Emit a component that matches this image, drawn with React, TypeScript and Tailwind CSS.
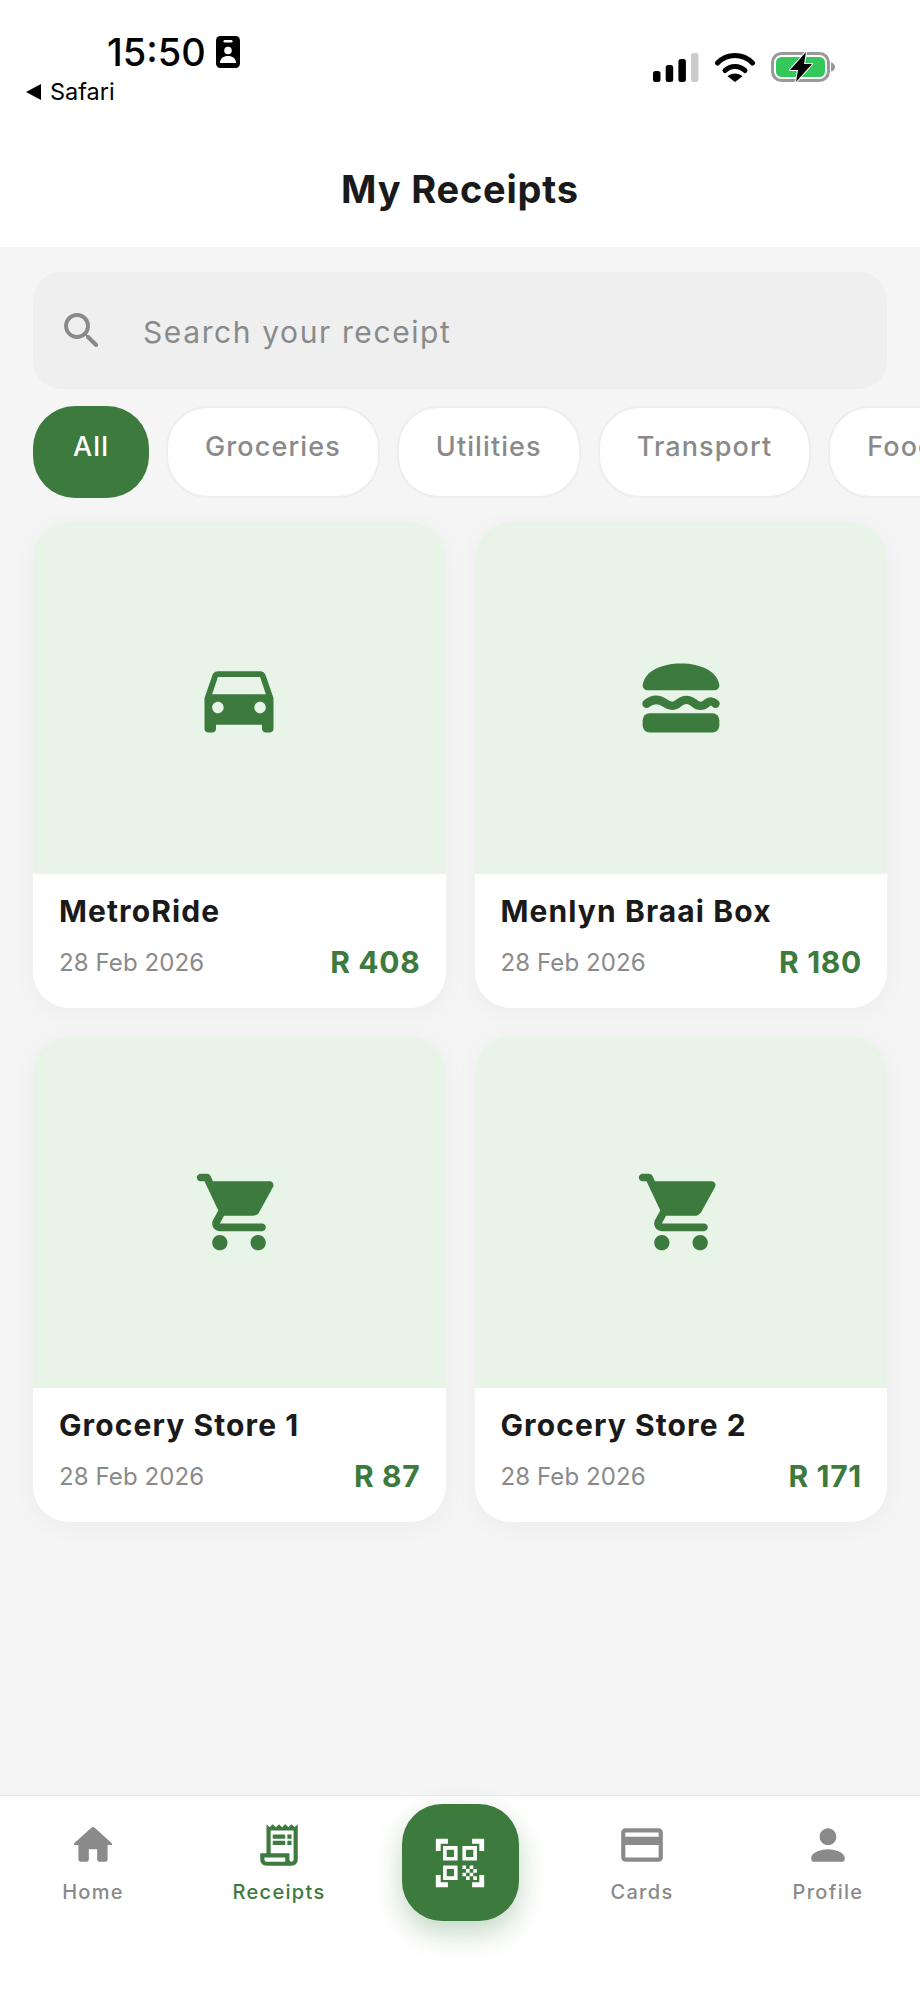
import React from 'react';

const GREEN = '#3d7a3d';

const paths = {
  car: 'M18.92 6.01C18.72 5.42 18.16 5 17.5 5h-11c-.66 0-1.21.42-1.42 1.01L3 12v8c0 .55.45 1 1 1h1c.55 0 1-.45 1-1v-1h12v1c0 .55.45 1 1 1h1c.55 0 1-.45 1-1v-8l-2.08-5.99zM6.5 16c-.83 0-1.5-.67-1.5-1.5S5.67 13 6.5 13s1.5.67 1.5 1.5S7.33 16 6.5 16zm11 0c-.83 0-1.5-.67-1.5-1.5s.67-1.5 1.5-1.5 1.5.67 1.5 1.5-.67 1.5-1.5 1.5zM5 11l1.5-4.5h11L19 11H5z',
  cart: 'M7 18c-1.1 0-1.99.9-1.99 2S5.9 22 7 22s2-.9 2-2-.9-2-2-2zM1 3c0 .55.45 1 1 1h1l3.6 7.59-1.35 2.44C4.52 15.37 5.48 17 7 17h11c.55 0 1-.45 1-1s-.45-1-1-1H7l1.1-2h7.45c.75 0 1.41-.41 1.75-1.03l3.58-6.49c.37-.66-.11-1.48-.87-1.48H5.21l-.67-1.43c-.16-.35-.52-.57-.9-.57H2c-.55 0-1 .45-1 1zm16 15c-1.1 0-1.99.9-1.99 2s.89 2 1.99 2 2-.9 2-2-.9-2-2-2z',
  home: 'M10 19v-5h4v5c0 .55.45 1 1 1h3c.55 0 1-.45 1-1v-7h1.7c.46 0 .68-.57.33-.87L12.67 3.6c-.38-.34-.96-.34-1.34 0l-8.36 7.53c-.34.3-.13.87.33.87H5v7c0 .55.45 1 1 1h3c.55 0 1-.45 1-1z',
  receipt: 'M19.5 3.5 18 2l-1.5 1.5L15 2l-1.5 1.5L12 2l-1.5 1.5L9 2 7.5 3.5 6 2v14H3v3c0 1.66 1.34 3 3 3h12c1.66 0 3-1.34 3-3V2l-1.5 1.5zM15 20H6c-.55 0-1-.45-1-1v-1h10v2zm4-1c0 .55-.45 1-1 1s-1-.45-1-1v-3H8V5h11v14zM9 7h6v2H9zM16 7h2v2h-2zM9 10h6v2H9zM16 10h2v2h-2z',
  qr: 'M9.5 6.5v3h-3v-3h3M11 5H5v6h6V5zm-1.5 9.5v3h-3v-3h3M11 13H5v6h6v-6zm6.5-6.5v3h-3v-3h3M19 5h-6v6h6V5zm-6 8h1.5v1.5H13V13zm1.5 1.5H16V16h-1.5v-1.5zM16 13h1.5v1.5H16V13zm-3 3h1.5v1.5H13V16zm1.5 1.5H16V19h-1.5v-1.5zM16 16h1.5v1.5H16V16zm1.5-1.5H19V16h-1.5v-1.5zm0 3H19V19h-1.5v-1.5zM22 7h-2V4h-3V2h5v5zm0 15v-5h-2v3h-3v2h5zM2 22h5v-2H4v-3H2v5zM2 2v5h2V4h3V2H2z',
  card: 'M20 4H4c-1.11 0-1.99.89-1.99 2L2 18c0 1.11.89 2 2 2h16c1.11 0 2-.89 2-2V6c0-1.11-.89-2-2-2zm0 14H4v-6h16v6zm0-10H4V6h16v2z',
  person: 'M12 12c2.21 0 4-1.79 4-4s-1.79-4-4-4-4 1.79-4 4 1.79 4 4 4zm0 2c-2.67 0-8 1.34-8 4v1c0 .55.45 1 1 1h14c.55 0 1-.45 1-1v-1c0-2.66-5.33-4-8-4z',
  search: 'M15.5 14h-.79l-.28-.27c1.2-1.4 1.82-3.31 1.48-5.34-.47-2.78-2.79-5-5.59-5.34-4.2-.52-7.75 3.03-7.23 7.23.34 2.8 2.56 5.12 5.34 5.59 2.03.34 3.94-.28 5.34-1.48l.27.28v.79l4.25 4.25c.41.41 1.08.41 1.49 0 .41-.41.41-1.08 0-1.49L15.5 14zm-6 0C7.01 14 5 11.99 5 9.5S7.01 5 9.5 5 14 7.01 14 9.5 11.99 14 9.5 14z',
};

type IconName = keyof typeof paths;

function Icon({ name, size, color }: { name: IconName; size: number; color: string }) {
  return (
    <svg width={size} height={size} viewBox="0 0 24 24" fill={color} className="block shrink-0">
      <path d={paths[name]} />
    </svg>
  );
}

function Burger() {
  return (
    <svg width={92} height={92} viewBox="0 0 24 24" fill={GREEN} className="block">
      <path d="M3.4 10h17.2c.8 0 1.5-.6 1.4-1.4C21.4 5 17.2 3 12 3S2.6 5 2 8.6C1.9 9.4 2.6 10 3.4 10z" />
      <rect x="2" y="16" width="20" height="5" rx="1.8" />
      <path
        d="M3 13.5c1.6-1.3 3.2-1.3 4.8-.2 1.4 1 2.4 1 3.6 0 1.4-1.1 2.6-1.1 4 0 1.2 1 2.2 1 3.4 0 .8-.6 1.4-.6 2.2.2"
        fill="none"
        stroke={GREEN}
        strokeWidth="2.2"
        strokeLinecap="round"
      />
    </svg>
  );
}

function StatusIcons() {
  return (
    <div className="flex items-start">
      <svg width={46} height={30} viewBox="0 0 46 30" className="block mt-px">
        <rect x="0" y="18" width="7.5" height="11" rx="2.5" fill="#000" />
        <rect x="12.7" y="12" width="7.5" height="17" rx="2.5" fill="#000" />
        <rect x="25.4" y="6" width="7.5" height="23" rx="2.5" fill="#000" />
        <rect x="38" y="0" width="7.5" height="29" rx="2.5" fill="#cbcbcb" />
      </svg>
      <svg width={40} height={30} viewBox="0 0 40 30" className="block ml-[16px]">
        <path d="M2.5 11C12 1 28 1 37.5 11" fill="none" stroke="#000" strokeWidth="5" strokeLinecap="round" />
        <path d="M10 18.5C15.5 13 24.500 13 30 18.500" fill="none" stroke="#000" strokeWidth="5" strokeLinecap="round" />
        <path d="M12.500 24.300C17 20.500 23 20.500 27.500 24.300L20 30z" fill="#000" />
      </svg>
      <svg width={64} height={30} viewBox="0 0 64 30" className="block ml-[16px]">
        <rect x="1.500" y="1.500" width="56" height="27" rx="9" fill="none" stroke="#999" strokeWidth="3" />
        <rect x="5" y="5" width="49" height="20" rx="5.500" fill="#34c759" />
        <path d="M60 10.500c2.500.5 4 2 4 4.500s-1.500 4-4 4.500z" fill="#999" />
        <path d="M35 0 19 18h8l-2 12 16-18h-8z" fill="#000" stroke="#fff" strokeWidth="2" paintOrder="stroke" strokeLinejoin="round" />
      </svg>
    </div>
  );
}

const chips = ['All', 'Groceries', 'Utilities', 'Transport', 'Food'];

const receipts = [
  { name: 'MetroRide', amount: 'R 408', icon: <Icon name="car" size={92} color={GREEN} /> },
  { name: 'Menlyn Braai Box', amount: 'R 180', icon: <Burger /> },
  { name: 'Grocery Store 1', amount: 'R 87', icon: <Icon name="cart" size={92} color={GREEN} /> },
  { name: 'Grocery Store 2', amount: 'R 171', icon: <Icon name="cart" size={92} color={GREEN} /> },
];

function ReceiptCard({ name, amount, icon }: { name: string; amount: string; icon: React.ReactNode }) {
  return (
    <div className="h-[486px] rounded-[36px] bg-white overflow-hidden shadow-[0_4px_24px_rgba(0,0,0,0.04)]">
      <div className="h-[352px] bg-[#e9f4e9] flex items-center justify-center">{icon}</div>
      <div className="pl-[26px] pr-[25px] pt-[19px]">
        <div className="text-[30px] leading-[36px] font-bold tracking-[1.1px] text-[#1a1a1a]">{name}</div>
        <div className="mt-[15px] flex items-start justify-between">
          <span className="pt-[1px] text-[24px] leading-[36px] tracking-[0.1px] text-[#8a8a8a]">28 Feb 2026</span>
          <span className="text-[30px] leading-[36px] font-bold tracking-[0.7px] text-[#3d7a3d]">{amount}</span>
        </div>
      </div>
    </div>
  );
}

function NavItem({ icon, label, active }: { icon: IconName; label: string; active?: boolean }) {
  const color = active ? GREEN : '#8a8a8a';
  return (
    <div className="flex flex-col items-center">
      <Icon name={icon} size={50} color={color} />
      <span
        className={
          active
            ? 'mt-[8px] text-[20px] leading-[28px] font-medium tracking-[1.3px] text-[#3d7a3d]'
            : 'mt-[8px] text-[20px] leading-[28px] font-medium tracking-[1.3px] text-[#8a8a8a]'
        }
      >
        {label}
      </span>
    </div>
  );
}

export default function App() {
  return (
    <div className="w-[920px] h-[2000px] flex flex-col bg-[#f5f5f5] overflow-hidden font-['Inter',sans-serif]">
      {/* Header */}
      <div className="bg-white h-[247px] shrink-0">
        <div className="h-[130px] pt-[30px] relative flex justify-between">
          <div className="pl-[26px]">
            <div className="pl-[81px] flex items-center h-[44px]">
              <span className="text-[38px] leading-[44px] font-medium text-black">15:50</span>
              <svg width={24} height={32} viewBox="0 0 24 32" className="block ml-[10px]">
                <rect width="24" height="32" rx="4.500" fill="#000" />
                <rect x="7.500" y="4" width="9" height="2.500" rx="1.200" fill="#fff" />
                <circle cx="12" cy="14.500" r="3.800" fill="#fff" />
                <path d="M4 27c0-4.500 3.500-7 8-7s8 2.500 8 7z" fill="#fff" />
              </svg>
            </div>
            <div className="flex items-center h-[30px] mt-[3px]">
              <svg width={15} height={16} viewBox="0 0 15 16" className="block">
                <path d="M15 0v16L0 8z" fill="#000" />
              </svg>
              <span className="ml-[9px] text-[23.5px] leading-[30px] text-black">Safari</span>
            </div>
          </div>
          <div className="pr-[85px] pt-[22px]">
            <StatusIcons />
          </div>
        </div>
        <div className="h-[117px] flex items-center justify-center">
          <h1 className="text-[38px] font-bold leading-[44px] tracking-[0.8px] text-[#1a1a1a]">My Receipts</h1>
        </div>
      </div>

      {/* Content */}
      <div className="flex-1 pt-[25px] px-[33px]">
        <div className="h-[117px] rounded-[28px] bg-[#efefef] flex items-center pl-[25px]">
          <Icon name="search" size={48} color="#8a8a8a" />
          <span className="ml-[37px] mt-[2px] text-[30px] tracking-[1.6px] text-[#8a8a8a] leading-[36px]">Search your receipt</span>
        </div>

        <div className="mt-[17px] -mr-[33px] flex gap-[17px] overflow-hidden">
          {chips.map((chip, i) => (
            <div
              key={chip}
              className={
                i === 0
                  ? 'shrink-0 h-[92px] rounded-[42px] bg-[#3d7a3d] px-[40px] pt-[24px] text-[27px] leading-[34px] font-medium tracking-[1.1px] text-white'
                  : 'shrink-0 h-[92px] rounded-[42px] bg-white border-2 border-[#eeeeee] px-[37px] pt-[22px] text-[27px] leading-[34px] font-medium tracking-[1.1px] text-[#8a8a8a]'
              }
            >
              {chip}
            </div>
          ))}
        </div>

        <div className="mt-[24px] grid grid-cols-2 gap-x-[29px] gap-y-[28px]">
          {receipts.map((r) => (
            <ReceiptCard key={r.name} name={r.name} amount={r.amount} icon={r.icon} />
          ))}
        </div>
      </div>

      {/* Bottom nav */}
      <div className="h-[205px] shrink-0 bg-white border-t border-[#e8e8e8] grid grid-cols-5 justify-items-center pt-[24px] relative">
        <div className="pl-[2px]">
          <NavItem icon="home" label="Home" />
        </div>
        <div className="pl-[6px]">
          <NavItem icon="receipt" label="Receipts" active />
        </div>
        <div className="-mt-[16px] w-[117px] h-[117px] rounded-[40px] bg-[#3d7a3d] flex items-center justify-center shadow-[0_12px_28px_rgba(61,122,61,0.3)]">
          <Icon name="qr" size={58} color="#ffffff" />
        </div>
        <div className="pr-[4px]">
          <NavItem icon="card" label="Cards" />
        </div>
        <NavItem icon="person" label="Profile" />
      </div>
    </div>
  );
}
